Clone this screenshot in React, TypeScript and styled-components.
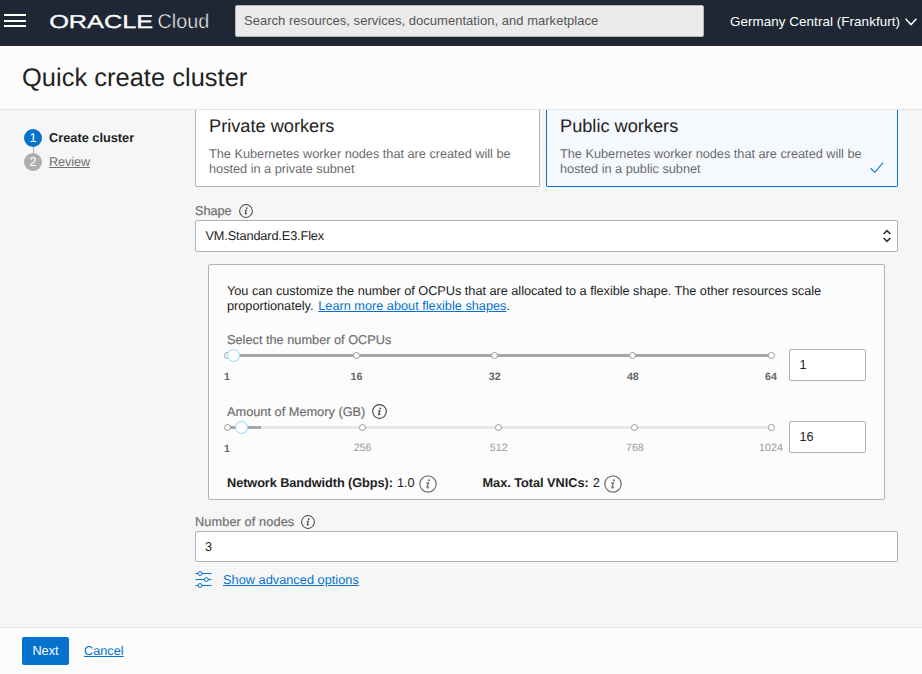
import React from 'react';
import styled, { createGlobalStyle, css } from 'styled-components';

const GlobalStyle = createGlobalStyle`
  * { box-sizing: border-box; }
  body {
    margin: 0;
    font-family: "Liberation Sans", Arial, sans-serif;
    font-size: 12.75px;
    line-height: 15px;
    letter-spacing: -0.02px;
    text-rendering: geometricPrecision;
    color: #222;
    background: #f6f6f6;
  }
`;

const Page = styled.div`
  display: flex;
  flex-direction: column;
  width: 922px;
  height: 674px;
  overflow: hidden;
`;

const TopBar = styled.header`
  display: flex;
  flex: none;
  align-items: flex-start;
  height: 46px;
  background: #1e2733;
  color: #fff;
`;

const MenuButton = styled.button`
  display: flex;
  flex-direction: column;
  gap: 3.5px;
  width: 22px;
  margin: 14px 0 0 4px;
  padding: 0;
  border: 0;
  background: none;
`;

const MenuLine = styled.span`
  height: 2px;
  flex: none;
  background: #fff;
`;

const Brand = styled.svg`
  display: block;
  flex: none;
  margin: 8px 0 0 22px;
`;

const SearchInput = styled.input`
  flex: none;
  width: 469px;
  height: 32px;
  margin: 5px 0 0 25px;
  padding: 0 8px 1px;
  border: 1px solid #b4b8bf;
  border-radius: 2px;
  background: #ebebeb;
  font: 13px "Liberation Sans", Arial, sans-serif;
  letter-spacing: 0.028px;
  outline: none;
  &::placeholder { color: #555; opacity: 1; }
`;

const RegionButton = styled.button`
  display: flex;
  align-items: center;
  gap: 4.5px;
  margin: 14px 0 0 26px;
  padding: 0;
  border: 0;
  background: none;
  color: #fff;
  font: 13.4px/15px "Liberation Sans", Arial, sans-serif;
  letter-spacing: 0.07px;
  white-space: nowrap;
`;

const TitleBar = styled.div`
  flex: none;
  height: 64px;
  padding: 18px 22px 0;
  background: #fcfcfc;
  border-bottom: 1px solid #e2e4e5;
`;

const Title = styled.h1`
  margin: 0;
  font-size: 25.4px;
  line-height: 29px;
  font-weight: 400;
  letter-spacing: 0.05px;
`;

const Main = styled.main`
  display: flex;
  flex: 1;
  min-height: 0;
  padding-right: 24px;
`;

const Steps = styled.ol`
  flex: none;
  width: 195px;
  margin: 0;
  padding: 19px 0 0 24px;
  list-style: none;
`;

const Step = styled.li`
  display: flex;
  align-items: center;
  gap: 7px;
  height: 18px;
`;

const StepConnector = styled.li`
  width: 1px;
  height: 6px;
  margin-left: 9px;
  background: #aeaeae;
`;

const StepNumber = styled.span<{ $active?: boolean }>`
  width: 18px;
  height: 18px;
  border-radius: 50%;
  background: ${(p) => (p.$active ? '#0572ce' : '#aeaeae')};
  color: #fff;
  line-height: 17px;
  text-align: center;
`;

const StepName = styled.span<{ $active?: boolean }>`
  padding-bottom: 1px;
  ${(p) =>
    p.$active
      ? css`font-weight: 700; letter-spacing: 0.01px;`
      : css`color: #6f6f6f; text-decoration: underline; letter-spacing: -0.14px;`}
`;

const Form = styled.section`
  flex: 1;
  min-width: 0;
`;

const Cards = styled.div`
  display: grid;
  grid-template-columns: 345px 352px;
  gap: 6px;
  height: 77px;
`;

const Card = styled.div<{ $selected?: boolean }>`
  display: flex;
  justify-content: space-between;
  padding: 6px 13px 0;
  border: 1px solid ${(p) => (p.$selected ? '#0572ce' : '#aeb3bb')};
  border-top: 0;
  border-radius: 0 0 2px 2px;
  background: ${(p) => (p.$selected ? '#f5f9fe' : '#fff')};
`;

const CardTitle = styled.h2`
  margin: 0 0 9px;
  font-size: 18.2px;
  line-height: 21px;
  font-weight: 400;
  letter-spacing: 0;
`;

const CardText = styled.p`
  width: 306px;
  margin: 0;
  color: #6b6b6b;
`;

const CheckIcon = styled.svg`
  flex: none;
  margin-top: 46px;
`;

const FieldLabel = styled.div<{ $top: number; $spacing?: number }>`
  display: flex;
  align-items: center;
  gap: 7px;
  height: 15px;
  margin-top: ${(p) => p.$top}px;
  color: #6f6f6f;
  -webkit-text-stroke: 0.2px #6f6f6f;
  letter-spacing: ${(p) => p.$spacing ?? 0}px;
`;

const Select = styled.div`
  display: flex;
  align-items: center;
  justify-content: space-between;
  height: 32px;
  margin-top: 2px;
  padding: 0 5px 0 9.5px;
  border: 1px solid #aeb3bb;
  border-radius: 2px;
  background: #fff;
  letter-spacing: -0.14px;
`;

const SelectValue = styled.span`
  padding-bottom: 1px;
`;

const TextInput = styled.input`
  display: block;
  width: 100%;
  height: 31px;
  margin-top: 2px;
  padding: 0 9px;
  border: 1px solid #aeb3bb;
  border-radius: 2px;
  background: #fff;
  color: #222;
  font: 12.7px "Liberation Sans", Arial, sans-serif;
  outline: none;
`;

const NumberInput = styled(TextInput)`
  width: 77px;
  height: 32px;
  margin: 0;
  padding: 0 9.5px;
`;

const Panel = styled.div`
  width: 677px;
  height: 236px;
  margin: 12px 0 0 13px;
  padding: 18px 18px 0;
  border: 1px solid #aeb3bb;
  border-radius: 2px;
  background: #fcfcfc;
`;

const Description = styled.p`
  margin: 0;
  letter-spacing: -0.033px;
  white-space: nowrap;
`;

const Link = styled.a<{ $spacing?: number }>`
  color: #0572ce;
  text-decoration: underline;
  letter-spacing: ${(p) => p.$spacing ?? -0.01}px;
`;

const DocsLink = styled(Link)`
  margin-left: 1.3px;
`;

const SliderField = styled.div<{ $top: number }>`
  display: grid;
  grid-template-columns: 544px 77px;
  column-gap: 18px;
  height: 54px;
  margin-top: ${(p) => p.$top}px;
`;

const Track = styled.div`
  position: relative;
  height: 3px;
  margin-top: 7px;
  background: #e8e8e8;
`;

const Fill = styled.div`
  height: 3px;
  background: #a6a6a6;
`;

const Marker = styled.span`
  position: absolute;
  top: -2px;
  width: 7px;
  height: 7px;
  margin-left: -3.5px;
  border: 1px solid #999;
  border-radius: 50%;
  background: #fff;
`;

const Thumb = styled.span`
  position: absolute;
  top: -5px;
  width: 13px;
  height: 13px;
  margin-left: -6.5px;
  border: 1px solid #8fd8fb;
  border-radius: 50%;
  background: #fff;
`;

const TickLabel = styled.span<{ $strong: boolean; $drop: number }>`
  position: absolute;
  top: ${(p) => p.$drop}px;
  transform: translateX(-50%);
  font-size: 10.7px;
  line-height: 13px;
  letter-spacing: 0;
  color: ${(p) => (p.$strong ? '#666' : '#999')};
  font-weight: ${(p) => (p.$strong ? 700 : 400)};
`;

const Summary = styled.div`
  display: flex;
  height: 17px;
  margin-top: -1px;
`;

const SummaryItem = styled.div<{ $width?: number; $spacing: number }>`
  display: flex;
  align-items: center;
  gap: 4px;
  width: ${(p) => (p.$width ? `${p.$width}px` : 'auto')};
  b { letter-spacing: ${(p) => p.$spacing}px; }
  svg { position: relative; top: 1px; }
`;

const Advanced = styled.div`
  display: flex;
  align-items: center;
  gap: 11px;
  margin-top: 9px;
`;

const Footer = styled.footer`
  display: flex;
  flex: none;
  align-items: center;
  gap: 15px;
  height: 47px;
  padding-left: 22px;
  background: #fcfcfc;
  border-top: 1px solid #e2e4e5;
`;

const NextButton = styled.button`
  width: 47px;
  height: 28px;
  padding: 0 0 1px;
  border: 0;
  border-radius: 2px;
  background: #0572ce;
  color: #fff;
  font: 12.7px "Liberation Sans", Arial, sans-serif;
`;

const CancelLink = styled(Link)`
  padding-bottom: 1px;
`;

function InfoIcon({ size, light }: { size: number; light?: boolean }) {
  const color = light ? '#777' : '#444';
  return (
    <svg width={size} height={size} viewBox="0 0 16 16" fill="none" stroke={color}>
      <circle cx="8" cy="8" r="7.3" strokeWidth="1.15" />
      <circle cx="8.8" cy="4.7" r="1" fill={color} stroke="none" />
      <path d="M6.5 7.2h1.8L7.2 10.9c-.2.8.6.7 1.6-.2" strokeWidth="1.3" />
    </svg>
  );
}

interface SliderProps {
  top: number;
  label: string;
  info?: boolean;
  spacing: number;
  max: number;
  ticks: number[];
  value: number;
  thumb: number;
  enabledTo: number;
}

function Slider({ top, label, info, spacing, max, ticks, value, thumb, enabledTo }: SliderProps) {
  const place = (v: number) => `${((v - 1) / (max - 1)) * 100}%`;
  return (
    <SliderField $top={top}>
      <div>
        <FieldLabel $top={-17} $spacing={spacing}>
          {label}
          {info && <InfoIcon size={15} />}
        </FieldLabel>
        <Track>
          <Fill style={{ width: `${enabledTo}%` }} />
          {ticks.map((t) => (
            <React.Fragment key={t}>
              <Marker style={{ left: place(t) }} />
              <TickLabel
                $strong={t === 1 || enabledTo === 100}
                $drop={t === 1 || enabledTo === 100 ? 17 : 16}
                style={{ left: place(t) }}
              >
                {t}
              </TickLabel>
            </React.Fragment>
          ))}
          <Thumb style={{ left: `${thumb}%` }} />
        </Track>
      </div>
      <div>
        <NumberInput defaultValue={value} />
      </div>
    </SliderField>
  );
}

export default function App() {
  return (
    <Page>
      <GlobalStyle />
      <TopBar>
        <MenuButton aria-label="Menu">
          <MenuLine />
          <MenuLine />
          <MenuLine />
        </MenuButton>
        <Brand width="162" height="26" viewBox="0 0 162 26" fill="#fff" fontFamily="Liberation Sans, Arial, sans-serif">
          <text x="1.2" y="19.6" fontSize="18.6" stroke="#fff" strokeWidth="0.3" textLength="104" lengthAdjust="spacingAndGlyphs">ORACLE</text>
          <text x="109.6" y="20" fontSize="20" stroke="#1e2733" strokeWidth="0.5" textLength="51.5" lengthAdjust="spacingAndGlyphs">Cloud</text>
        </Brand>
        <SearchInput placeholder="Search resources, services, documentation, and marketplace" />
        <RegionButton>
          Germany Central (Frankfurt)
          <svg width="12" height="8" viewBox="0 0 12 8" fill="none" stroke="#fff" strokeWidth="1.4">
            <path d="M.6 .8 6 6.6 11.4 .8" />
          </svg>
        </RegionButton>
      </TopBar>

      <TitleBar>
        <Title>Quick create cluster</Title>
      </TitleBar>

      <Main>
        <Steps>
          <Step>
            <StepNumber $active>1</StepNumber>
            <StepName $active>Create cluster</StepName>
          </Step>
          <StepConnector />
          <Step>
            <StepNumber>2</StepNumber>
            <StepName>Review</StepName>
          </Step>
        </Steps>

        <Form>
          <Cards>
            <Card>
              <div>
                <CardTitle>Private workers</CardTitle>
                <CardText>The Kubernetes worker nodes that are created will be hosted in a private subnet</CardText>
              </div>
            </Card>
            <Card $selected>
              <div>
                <CardTitle>Public workers</CardTitle>
                <CardText>The Kubernetes worker nodes that are created will be hosted in a public subnet</CardText>
              </div>
              <CheckIcon width="14" height="12" viewBox="0 0 14 12" fill="none" stroke="#1a7fd6" strokeWidth="1.2">
                <path d="M.6 6.3 4.8 10.4 13 .6" />
              </CheckIcon>
            </Card>
          </Cards>

          <FieldLabel $top={16} $spacing={-0.05}>
            Shape
            <InfoIcon size={14} />
          </FieldLabel>
          <Select>
            <SelectValue>VM.Standard.E3.Flex</SelectValue>
            <svg width="10" height="14" viewBox="0 0 10 14" fill="none" stroke="#333" strokeWidth="1.6">
              <path d="M1.6 5 5 1.6 8.4 5M1.6 9 5 12.4 8.4 9" />
            </svg>
          </Select>

          <Panel>
            <Description>
              You can customize the number of OCPUs that are allocated to a flexible shape. The other resources scale
              <br />
              proportionately. <DocsLink>Learn more about flexible shapes</DocsLink>.
            </Description>
            <Slider
              top={36}
              label="Select the number of OCPUs"
              spacing={0}
              max={64}
              ticks={[1, 16, 32, 48, 64]}
              value={1}
              thumb={1.2}
              enabledTo={100}
            />
            <Slider
              top={18}
              label="Amount of Memory (GB)"
              info
              spacing={0.01}
              max={1024}
              ticks={[1, 256, 512, 768, 1024]}
              value={16}
              thumb={2.67}
              enabledTo={6.25}
            />
            <Summary>
              <SummaryItem $width={255.5} $spacing={-0.08}>
                <b>Network Bandwidth (Gbps):</b> 1.0 <InfoIcon size={18} light />
              </SummaryItem>
              <SummaryItem $spacing={-0.03}>
                <b>Max. Total VNICs:</b> 2 <InfoIcon size={18} light />
              </SummaryItem>
            </Summary>
          </Panel>

          <FieldLabel $top={14} $spacing={0.1}>
            Number of nodes
            <InfoIcon size={14} />
          </FieldLabel>
          <TextInput defaultValue="3" />

          <Advanced>
            <svg width="17" height="17" viewBox="0 0 17 17" fill="none" stroke="#0572ce">
              <path d="M.5 2.5H3M7 2.5h9.5M.5 8.5H9M13.5 8.5h3M.5 14.5H3M7 14.5h9.5" />
              <circle cx="5" cy="2.5" r="2" />
              <circle cx="11.3" cy="8.5" r="2" />
              <circle cx="5" cy="14.5" r="2" />
            </svg>
            <Link $spacing={0.02}>Show advanced options</Link>
          </Advanced>
        </Form>
      </Main>

      <Footer>
        <NextButton>Next</NextButton>
        <CancelLink>Cancel</CancelLink>
      </Footer>
    </Page>
  );
}
